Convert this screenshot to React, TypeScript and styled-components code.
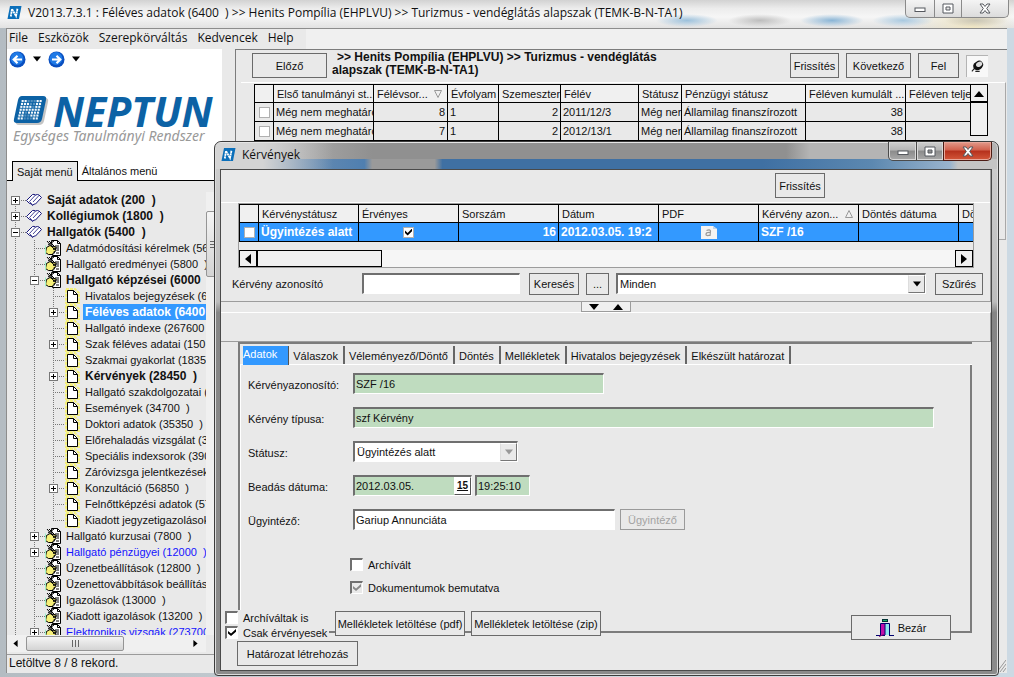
import React from "react";
import styled, { createGlobalStyle, css } from "styled-components";

const face = "#e9e9e9";
const line = "#7c7c7c";
const select = "#3399ff";
const sans = '"Liberation Sans", Arial, sans-serif';
const segoe = '"Open Sans", "Noto Sans", sans-serif';

const GlobalStyle = createGlobalStyle`
  *, *::before, *::after { box-sizing: border-box; }
  body { margin: 0; background: #c9d3da; font: 11px/16px ${sans}; color: #111; }
  button, input, select { font: inherit; color: inherit; margin: 0; border-radius: 0; }
  h1, h2, p, ul { margin: 0; padding: 0; font: inherit; list-style: none; }
  svg { flex: none; }
`;

/* ---------- window chrome ---------- */

const MainWindow = styled.div`
  position: relative;
  display: flex;
  flex-direction: column;
  height: 100vh;
  min-height: 600px;
  overflow: hidden;
  padding: 0 7px 4px 6px;
  background: linear-gradient(90deg, #b4bcc2, #cfd8de 50%, #ccd9e3);
`;

const MainTitle = styled.header`
  display: flex;
  flex: none;
  align-items: flex-start;
  height: 28px;
  margin: 0 -7px 0 -6px;
  padding: 0 5px 0 7px;
  background:
    radial-gradient(ellipse at center, #9cc1dc, transparent 70%) 656px 14px / 62px 13px no-repeat,
    radial-gradient(ellipse at center, #bdbdbd, transparent 70%) 728px 14px / 64px 13px no-repeat,
    radial-gradient(ellipse at center, #8ab5d6, transparent 70%) 800px 14px / 64px 13px no-repeat,
    radial-gradient(ellipse at center, #a9c9e0, transparent 70%) 872px 14px / 62px 13px no-repeat,
    radial-gradient(ellipse at center, #c9c5b6, transparent 70%) 944px 14px / 64px 13px no-repeat,
    linear-gradient(90deg, transparent 90%, #f0e6c4 96%, transparent),
    linear-gradient(#d2d2d2, #ececec 30%, #f6f6f6 60%, #e2e2e2);
`;

const TitleIcon = styled.span`
  display: flex;
  padding-top: 5px;
  margin-right: 6px;
`;

const MainTitleText = styled.h1`
  flex: 1;
  padding-top: 5px;
  font: 12px/16px ${segoe};
  white-space: pre;
`;

const Caption = styled.div`
  display: flex;
`;

const CaptionButton = styled.button<{ $w: number; $tone?: "red" | "dark" }>`
  display: flex;
  align-items: center;
  justify-content: center;
  width: ${(p) => p.$w}px;
  height: 18px;
  padding: 0;
  border: 1px solid #8a8a8a;
  border-top: 0;
  margin-left: -1px;
  background: linear-gradient(#f4f4f4, #e8e8e8 50%, #dcdcdc);
  &:first-child { border-bottom-left-radius: 5px; }
  &:last-child { border-bottom-right-radius: 5px; }
  ${(p) => p.$tone === "dark" && css`
    height: 19px;
    border-color: #4b4b4b;
    box-shadow: inset 0 0 0 1px #d9d9d9;
    background: linear-gradient(#cfcfcf, #b5b5b5 45%, #8b8b8b 50%, #a9a9a9);
  `}
  ${(p) => p.$tone === "red" && css`
    height: 19px;
    border-color: #4d1c14;
    box-shadow: inset 0 0 0 1px #e8a79a;
    background: linear-gradient(#e29a8b, #d1604c 45%, #b5301c 50%, #d4573a);
  `}
`;

const MenuBar = styled.nav`
  flex: none;
  display: flex;
  height: 21px;
  border: 1px solid #8d8d8d;
  border-width: 1px 0 0 1px;
  background: #f0f0f0;
  font: 12px/18px ${segoe};
`;

const MenuItems = styled.ul`
  display: flex;
  gap: 10px;
  padding: 0 12px 0 2px;
  background: ${face};
`;

const MenuLink = styled.a`
  color: inherit;
  text-decoration: none;
`;

const Workspace = styled.div`
  display: flex;
  flex: 1;
  min-height: 0;
  border-left: 1px solid #8d8d8d;
  background: ${face};
`;

/* ---------- left pane ---------- */

const Sidebar = styled.aside`
  display: flex;
  flex: none;
  flex-direction: column;
  width: 215px;
  margin-right: 13px;
`;

const SidebarTop = styled.div`
  flex: none;
  background: #fff;
`;

const NavIcons = styled.div`
  display: flex;
  align-items: center;
  gap: 7px;
  height: 20px;
  padding-left: 2px;
`;

const NavButton = styled.button`
  display: flex;
  padding: 0;
  border: 0;
  background: none;
`;

const Logo = styled.div`
  height: 92px;
  padding: 26px 0 0 6px;
`;

const LogoRow = styled.div`
  display: flex;
  height: 32px;
`;

const LogoWord = styled.span`
  margin-left: 4px;
  font: italic bold 41px/32px "Noto Sans", "Open Sans", sans-serif;
  color: #0c62a5;
`;

const LogoTag = styled.p`
  font: italic 14px/18px "Noto Sans", "Open Sans", sans-serif;
  color: #999;
  white-space: nowrap;
`;

const MenuTabs = styled.div`
  display: flex;
  height: 20px;
  background: linear-gradient(#000, #000) 0 100% / 100% 1px no-repeat;
  padding-left: 5px;
`;

const MenuTab = styled.button<{ $active?: boolean }>`
  padding: 0 4px;
  border: 0;
  background: none;
  line-height: 20px;
  ${(p) => p.$active && css`
    border: 1px solid #000;
    border-bottom: 0;
    background: ${face};
  `}
`;

const TreeArea = styled.div`
  display: flex;
  flex: 1;
  min-height: 0;
  padding-top: 11px;
`;

const Tree = styled.ul`
  flex: 1;
  min-width: 0;
  overflow: hidden;
`;

const TreeRow = styled.li`
  display: flex;
  height: 16px;
  white-space: pre;
`;

const dotsV = "repeating-linear-gradient(#777 0 1px, transparent 1px 2px)";
const dotsH = "repeating-linear-gradient(90deg, #777 0 1px, transparent 1px 2px)";

const Guide = styled.span<{ $branch?: boolean; $from?: "top" | "middle"; $half?: boolean }>`
  display: flex;
  flex: none;
  align-items: center;
  width: 19px;
  padding-left: 4px;
  background-image: ${dotsV}, ${(p) => (p.$branch ? dotsH : "none")};
  background-repeat: no-repeat;
  background-size: 1px ${(p) => (p.$half ? 8 : 16)}px, 11px 1px;
  background-position: 8px ${(p) => (p.$from === "middle" ? 8 : 0)}px, 8px 8px;
`;

const Expander = styled.button<{ $open?: boolean }>`
  width: 9px;
  height: 9px;
  padding: 0;
  border: 1px solid #777;
  background:
    linear-gradient(#000, #000) 1px 3px / 5px 1px no-repeat,
    linear-gradient(#000, #000) 3px 1px / 1px ${(p) => (p.$open ? 0 : 5)}px no-repeat,
    #fff;
`;

const TreeLabel = styled.span<{ $bold?: boolean; $blue?: boolean; $selected?: boolean }>`
  flex: none;
  margin-left: 3px;
  padding: 0 2px;
  ${(p) => p.$bold && css`font: bold 12px/16px ${sans};`}
  ${(p) => p.$blue && css`color: #1414ff;`}
  ${(p) => p.$selected && css`background: ${select}; color: #fff;`}
`;

const TreeScroll = styled.div`
  flex: none;
  width: 16px;
  padding-top: 19px;
  background: #f0f0f0;
`;

const Thumb = styled.div<{ $vertical?: boolean }>`
  display: flex;
  align-items: center;
  justify-content: ${(p) => (p.$vertical ? "flex-start" : "center")};
  padding-left: ${(p) => (p.$vertical ? 3 : 0)}px;
  border: 1px solid #959595;
  border-radius: 2px;
  background: linear-gradient(#f5f5f5, #e4e4e4 50%, #d4d4d4);
  width: ${(p) => (p.$vertical ? 16 : 98)}px;
  height: ${(p) => (p.$vertical ? 66 : 15)}px;
`;

const BottomScroll = styled.div`
  display: flex;
  flex: none;
  align-items: center;
  height: 17px;
  width: 199px;
  padding-left: 5px;
  gap: 7px;
  background: #f0f0f0;
`;

const Status = styled.footer`
  flex: none;
  height: 19px;
  margin-top: 2px;
  padding-left: 2px;
  border-top: 1px solid #9b9b9b;
  font: 12px/17px ${sans};
`;

/* ---------- right pane ---------- */

const RecordPane = styled.main`
  flex: 1;
  min-width: 0;
  border-top: 1px solid ${line};
  border-left: 1px solid ${line};
`;

const RecordHead = styled.div`
  display: flex;
  height: 32px;
  padding: 3px 19px 0 16px;
  gap: 7px;
`;

const RecordTitle = styled.h2`
  flex: 1;
  margin: -2px 0 0 -2px;
  font: bold 12px/13px ${sans};
`;

const TitleWidth = styled.span`
  display: block;
  width: 340px;
  text-indent: 5px;
`;

const TitleRest = styled.span`
  display: block;
  text-indent: 0;
`;

const Button = styled.button<{ $w: number; $h?: number }>`
  display: flex;
  flex: none;
  align-items: center;
  justify-content: center;
  gap: 4px;
  width: ${(p) => p.$w}px;
  height: ${(p) => p.$h ?? 25}px;
  padding: 0;
  border: 1px solid #6a6a6a;
  background: ${face};
  white-space: nowrap;
  &:disabled { border-color: #9a9a9a; color: #a3a3a3; }
`;

const PinButton = styled.button`
  display: flex;
  align-items: center;
  justify-content: center;
  width: 22px;
  height: 22px;
  margin-top: 2px;
  padding: 0;
  border: 1px solid #b4b4b4;
  border-width: 1px 0 0 1px;
  background: #f8f8f8;
`;

const RecordGrid = styled.section`
  display: flex;
  height: 158px;
  margin: 0 1px 0 5px;
  padding: 1px 17px 0 13px;
  border: 1px solid #a8a8a8;
  border-width: 1px 1px 1px 0;
  border-top-color: #fff;
`;

const Clip = styled.div`
  flex: 1;
  min-width: 0;
  overflow: hidden;
`;

const Table = styled.table<{ $w: number }>`
  width: ${(p) => p.$w}px;
  table-layout: fixed;
  border-collapse: separate;
  border-spacing: 0;
  border: 1px solid #000;
  border-width: 1px 0 0 1px;
`;

const Th = styled.th`
  height: 18px;
  padding: 0 3px;
  border: 1px solid #000;
  border-width: 0 1px 1px 0;
  background: #f0f0f0;
  font-weight: normal;
  line-height: 16px;
  text-align: left;
  white-space: nowrap;
  overflow: hidden;
`;

const HeadFlex = styled.span`
  display: flex;
  align-items: center;
  justify-content: space-between;
  padding-right: 2px;
`;

const Td = styled.td<{ $align?: "right" | "center"; $on?: boolean }>`
  height: 19px;
  padding: 0 2px;
  border: 1px solid #000;
  border-width: 0 1px 1px 0;
  line-height: 16px;
  text-align: ${(p) => p.$align ?? "left"};
  vertical-align: middle;
  white-space: nowrap;
  overflow: hidden;
  > svg, > input { display: block; margin: 0 auto; }
  ${(p) => p.$on && css`
    background: ${select};
    color: #fff;
    font: bold 12px/16px ${sans};
  `}
`;

const RecordScroll = styled.div`
  display: flex;
  flex: none;
  align-items: flex-start;
  justify-content: center;
  width: 18px;
  height: 52px;
  padding-top: 4px;
  border: 1px solid #000;
  background: linear-gradient(#000, #000) 0 16px / 100% 2px no-repeat, #f0f0f0;
`;

const SizeGrip = styled.svg`
  position: absolute;
  right: 8px;
  bottom: 5px;
`;

/* ---------- dialog ---------- */

const Dialog = styled.section`
  position: absolute;
  top: 141px;
  right: 15px;
  bottom: 1px;
  left: 214px;
  display: flex;
  flex-direction: column;
  padding: 0 6px 4px 5px;
  border: 1px solid #3c3c3c;
  border-radius: 7px 7px 4px 4px;
  background: linear-gradient(#cfcfcf, #bdbdbd 30%, #858585 32%, #8b8b8b);
  box-shadow: inset 0 0 0 1px #dcdcdc;
`;

const DialogTitle = styled.header`
  display: flex;
  flex: none;
  align-items: flex-start;
  height: 27px;
  margin: 0 -5px 0 -4px;
  padding: 0 5px;
  background:
    linear-gradient(#e6e6e6, #e6e6e6) 0 0 / 100% 1px no-repeat,
    linear-gradient(90deg, #d4d4d4 0 6%, #d4d4d400 15%),
    linear-gradient(90deg, #8a9db2, #4f7fb0 19%, #9a9a9a 20% 28%, #3f70a3 29% 70%, #5c88b0 84%, #9ab4cd 94%, #c4c4c4 95%) 0 100% / 100% 10px no-repeat,
    linear-gradient(90deg, #c4c4c4, #909090 20% 73%, #b4b4b4 76% 100%);
  border-radius: 6px 6px 0 0;
`;

const DialogTitleText = styled.h2`
  flex: 1;
  padding-top: 5px;
  font: 12px/16px ${segoe};
`;

const DialogBody = styled.div`
  display: flex;
  flex: 1;
  flex-direction: column;
  min-height: 0;
  border: 1px solid #4a4a4a;
  background: ${face};
`;

const ListPanel = styled.div`
  flex: none;
  border: 1px solid #9c9c9c;
  border-width: 0 1px 1px 0;
`;

const ListTools = styled.div`
  display: flex;
  justify-content: flex-end;
  height: 32px;
  padding: 3px 165px 0 0;
`;

const ListSection = styled.div`
  border-top: 1px solid #fff;
`;

const GridFrame = styled.div`
  margin: 0 16px 0 17px;
  border: 1px solid #9c9c9c;
`;

const ScrollRow = styled.div`
  display: flex;
  height: 17px;
  margin-top: 8px;
  background: #f6f6f6;
`;

const ScrollEnd = styled.button`
  display: flex;
  align-items: center;
  justify-content: center;
  width: 18px;
  padding: 0;
  border: 1px solid #000;
  background: #f0f0f0;
`;

const ScrollThumb = styled.div`
  width: 125px;
  margin-right: auto;
  border: 1px solid #000;
  background: #f0f0f0;
`;

const SearchRow = styled.div`
  display: flex;
  align-items: center;
  height: 33px;
  padding: 0 7px 2px 11px;
`;

const SearchLabel = styled.label`
  width: 130px;
`;

const Spacer = styled.span<{ $w: number }>`
  flex: none;
  width: ${(p) => p.$w}px;
`;

const sunken = css`
  border: 1px solid #fff;
  border-top: 2px solid #6f6f6f;
  border-left: 2px solid #6f6f6f;
`;

const TextBox = styled.input<{ $w: number; $green?: boolean }>`
  ${sunken}
  flex: none;
  width: ${(p) => p.$w}px;
  height: 21px;
  padding: 0 1px;
  background: ${(p) => (p.$green ? "#bfdcbf" : "#fff")};
  outline: 0;
`;

const SelectBox = styled.span<{ $w?: number }>`
  ${sunken}
  display: grid;
  flex: ${(p) => (p.$w ? "none" : "1")};
  width: ${(p) => (p.$w ? `${p.$w}px` : "auto")};
  height: 21px;
  background: #fff;
  > * { grid-area: 1 / 1; }
  select {
    width: 100%;
    padding: 0 2px;
    border: 0;
    background: none;
    appearance: none;
    outline: 0;
    opacity: 1;
    color: #111;
  }
`;

const SelectArrow = styled.span`
  display: flex;
  align-items: center;
  justify-content: center;
  justify-self: end;
  width: 17px;
  border: 1px solid #777;
  border-top-color: #fff;
  border-left-color: #ddd;
  background: ${face};
  pointer-events: none;
`;

const SplitBar = styled.div`
  display: flex;
  flex: none;
  justify-content: center;
  height: 10px;
`;

const SplitButton = styled.button`
  display: flex;
  align-items: center;
  justify-content: space-around;
  width: 50px;
  padding: 0;
  border: 1px solid #9c9c9c;
  border-top: 0;
  background: #f0f0f0;
`;

const Strip = styled.div`
  flex: none;
  height: 30px;
  border: 1px solid #9c9c9c;
  border-top-color: #fff;
  border-left: 0;
`;

const TabControl = styled.div`
  display: flex;
  flex: 1;
  flex-direction: column;
  min-height: 0;
  margin: 0 19px 0 17px;
  border-top: 2px solid ${line};
  border-left: 2px solid ${line};
`;

const TabList = styled.div`
  display: flex;
  flex: none;
  height: 21px;
  padding: 2px 0 0 3px;
  background: linear-gradient(#fff, #fff) 0 100% / 100% 1px no-repeat;
`;

const TabButton = styled.button<{ $active?: boolean }>`
  height: 18px;
  padding: 2px 5px 0 4px;
  border: 0;
  border-right: 2px solid #666;
  background: none;
  line-height: 16px;
  white-space: nowrap;
  ${(p) => p.$active && css`
    height: 19px;
    padding: 0 11px 3px 0;
    border-right: 1px solid #555;
    background: ${select};
    color: #fff;
  `}
`;

const TabPage = styled.form`
  flex: 1;
  padding: 8px 0 0 7px;
  border: 2px solid ${line};
  border-width: 0 2px 2px 0;
  border-left: 1px solid #fff;
`;

const FieldRow = styled.div`
  display: flex;
  align-items: center;
  height: 21px;
  margin-bottom: 13px;
`;

const FieldLabel = styled.label`
  width: 105px;
  padding-top: 3px;
  line-height: 18px;
`;

const DateField = styled.span`
  ${sunken}
  display: flex;
  width: 119px;
  height: 21px;
  margin-right: 3px;
  background: #bfdcbf;
  input {
    flex: 1;
    min-width: 0;
    padding: 0 1px;
    border: 0;
    background: none;
    outline: 0;
  }
  button {
    width: 17px;
    padding: 0;
    border: 1px solid #555;
    border-top-color: #fff;
    border-left-color: #fff;
    background: #fff;
    font: bold 10px/12px ${sans};
    text-decoration: underline;
  }
`;

const CheckLabel = styled.label`
  display: flex;
  align-items: center;
  gap: 5px;
  height: 15px;
`;

const PageChecks = styled.div`
  display: grid;
  gap: 8px;
  padding: 14px 0 0 102px;
`;

const Check = styled.input<{ $flat?: boolean }>`
  ${sunken}
  display: inline-grid;
  flex: none;
  width: 13px;
  height: 13px;
  appearance: none;
  background: #fff;
  ${(p) => p.$flat && css`
    width: 11px;
    height: 11px;
    border: 1px solid #b0b0b0;
  `}
  &::before {
    content: "";
    display: block;
    height: 7px;
    margin: 1px;
  }
  &:checked::before {
    background: #000;
    clip-path: polygon(0 30%, 38% 64%, 100% 0, 100% 40%, 38% 100%, 0 66%);
  }
  &:disabled { background: ${face}; }
  &:disabled::before { background: #888; }
`;

const DialogFoot = styled.div`
  position: relative;
  display: flex;
  flex: none;
  align-items: flex-start;
  height: 60px;
  margin-top: -23px;
  padding: 0 40px 0 3px;
`;

const FootRow = styled.div`
  display: flex;
  gap: 6px;
  height: 26px;
  margin-bottom: 5px;
`;

const FootChecks = styled.div`
  width: 105px;
  height: 30px;
  padding-left: 1px;
  background: ${face};
  white-space: nowrap;
`;

const FootLeft = styled.div`
  flex: 1;
  > button { margin-left: 13px; }
  ${FootRow} button { margin-top: 1px; }
`;

const CloseSlot = styled.div`
  padding-top: 5px;
`;

/* ---------- drawings ---------- */

const AppIcon = () => (
  <svg width="15" height="15" viewBox="0 0 15 15" aria-hidden>
    <path d="M3.500 1h11l-2.500 13H.5L3 1z" fill="#0b6fba" />
    <path d="M3.800 11.500 5 4l4 7 1.500-7.500" stroke="#fff" strokeWidth="1.800" fill="none" strokeDasharray="2.200 .4" />
  </svg>
);

const dotRows = ["1100011", "1110011", "1111011", "1111111", "1101111", "1100111", "1100011"];

const LogoMark = () => (
  <svg width="36" height="32" viewBox="0 0 36 32" aria-hidden>
    <path d="M11 3h21q4 0 3 4l-4 19q-1 4-5 4H6q-4 0-3-4L7 7q1-4 4-4z" fill="#c4c4c4" />
    <path d="M9 1h21q4 0 3 4l-4 19q-1 4-5 4H4q-4 0-3-4L5 5q1-4 4-4z" fill="#0c62a5" />
    {dotRows.flatMap((r, y) =>
      [...r].map((d, x) => (
        <rect
          key={`${x}-${y}`}
          x={8.6 + x * 3 - y * 0.65}
          y={5 + y * 2.9}
          width="2.1"
          height="2.1"
          fill="#fff"
          opacity={d === "1" ? 0.95 : 0.3}
        />
      )),
    )}
  </svg>
);

const ArrowBall = ({ flip }: { flip?: boolean }) => (
  <svg width="17" height="17" viewBox="0 0 17 17" aria-hidden>
    <circle cx="8.5" cy="8.5" r="8" fill="#0a4fc0" />
    <circle cx="8" cy="7.5" r="6.4" fill="#1f7ae6" />
    <path
      d={flip ? "M4 8.5h8M8.5 4.8l3.8 3.7-3.8 3.7" : "M13 8.5H5M8.5 4.8 4.7 8.5l3.8 3.7"}
      stroke="#fff"
      strokeWidth="2.2"
      fill="none"
    />
  </svg>
);

type Dir = "up" | "down" | "left" | "right";
const triPaths: Record<Dir, string> = {
  up: "M0 8 5 2l5 6z",
  down: "M0 2h10L5 8z",
  left: "M8 0v10L2 5z",
  right: "M2 0v10l6-5z",
};
const Tri = ({ dir, size = 9, color = "#000" }: { dir: Dir; size?: number; color?: string }) => (
  <svg width={size} height={size} viewBox="0 0 10 10" aria-hidden>
    <path d={triPaths[dir]} fill={color} />
  </svg>
);

const SortMark = ({ up }: { up?: boolean }) => (
  <svg width="8" height="8" viewBox="0 0 8 8" aria-hidden>
    <path d={up ? "M.5 7.5h7L4 .5z" : "M.5.5h7L4 7.5z"} fill="none" stroke="#999" />
  </svg>
);

const BookIcon = () => (
  <svg width="16" height="16" viewBox="0 0 16 16" aria-hidden>
    <path d="M.5 8.500 6.500 2.500q1.500-.5 3 .5Q11.500 2 13 3l2.500 2.500L9.500 12q-1.500-.5-3 1.500Q5.500 11 3.500 11.500z" fill="#fff" stroke="#15157a" />
    <path d="M9.500 3 3.500 9.500l3 3.500M13 3.500 7 10" fill="none" stroke="#15157a" strokeWidth=".8" />
  </svg>
);

const HandIcon = () => (
  <svg width="16" height="16" viewBox="0 0 16 16" aria-hidden>
    <path d="M6.500.5h6l3 3v12h-8z" fill="#fff" stroke="#000" />
    <path d="M12.500.5v3h3M10 6h4M11 8h3M12 10h2M11 13h3" fill="none" stroke="#000" />
    <path d="M1.500 7.500 5 5.500l2 1 4 .5v1.500L8 9l3 .5v1.500l-2 .5.500 1.500H8v1.500H3.500l-3-2z" fill="#f6ef78" stroke="#000" />
    <path d="M2 1l7 8M4 1l6 6M9 1 3 5" stroke="#000" fill="none" />
    <path d="M.5 5.500v9" stroke="#9df0c8" />
  </svg>
);

const PageIcon = () => (
  <svg width="16" height="16" viewBox="0 0 16 16" aria-hidden>
    <path d="M2 1h9l4 4v10H2z" fill="none" stroke="#f5f07a" strokeWidth="2" strokeDasharray="3 1" />
    <path d="M3.500 2.500h6l4 4v8h-10z" fill="#fff" stroke="#000" />
    <path d="M9.500 2.500v4h4" fill="none" stroke="#000" />
  </svg>
);

const PinIcon = () => (
  <svg width="13" height="13" viewBox="0 0 12 12" aria-hidden>
    <path d="M2 5q0-2 3-3.500Q8-.5 10 1.500t1 4Q9 9.500 5.500 9.500 2 9 2 5z" fill="#111" />
    <ellipse cx="7.500" cy="4" rx="3" ry="2.200" transform="rotate(-30 7.500 4)" fill="#ddd" />
    <path d="M3 8 .8 10.500M4 10.500h4" stroke="#222" />
  </svg>
);

const PdfIcon = () => (
  <svg width="16" height="13" viewBox="0 0 16 13" aria-hidden>
    <path d="M0 0h12l4 3v10H0z" fill="#f3f3f3" />
    <path d="M12 0v3h4" fill="#bdd4ea" />
    <path d="M5.500 4.500q3.500-1.500 4 .5l-.5 5M9.200 6.500q-4-.3-4.200 1.700t4 1" fill="none" stroke="#999" strokeWidth="1.200" />
  </svg>
);

const DoorIcon = () => (
  <svg width="18" height="18" viewBox="0 0 18 18" aria-hidden>
    <rect x="6.500" y=".5" width="5" height="2" fill="#19b36a" stroke="#033" />
    <path d="M4.500 16V4.500h9V16" fill="#8fe8ef" stroke="#00006e" />
    <path d="M5 5h4v11l-4 .5z" fill="#c010a8" />
    <path d="M9 4.500V16M0 16.500h9M13 16.500h5" stroke="#00006e" />
    <path d="M3 17.500 8 15.500" stroke="#800070" />
  </svg>
);

const captions = {
  min: <rect x="1" y="5" width="10" height="3.500" />,
  max: <path d="M1 1h10v9H1zM4 4h4v3H4z" />,
  close: <path d="M1 1h3l2 2.500L8 1h3L7.700 5.500 11 10H8L6 7.500 4 10H1l3.300-4.500z" />,
};
const CaptionGlyph = ({ kind }: { kind: keyof typeof captions }) => (
  <svg width="12" height="11" viewBox="0 0 12 11" fill="#fff" fillRule="evenodd" stroke="#55585e" aria-hidden>
    {captions[kind]}
  </svg>
);

const GripLines = ({ vertical }: { vertical?: boolean }) => (
  <svg width="8" height="8" viewBox="0 0 8 8" aria-hidden>
    <path d={vertical ? "M0 1.500h8M0 4.500h8M0 7.500h8" : "M1.500 0v7M4.500 0v7M7.500 0v7"} stroke="#666" />
  </svg>
);

/* ---------- data ---------- */

interface Node {
  level: 0 | 1 | 2;
  text: string;
  exp?: "+" | "-";
  bold?: boolean;
  blue?: boolean;
  selected?: boolean;
}

const nodes: Node[] = [
  { level: 0, text: "Saját adatok (200  )", exp: "+", bold: true },
  { level: 0, text: "Kollégiumok (1800  )", exp: "+", bold: true },
  { level: 0, text: "Hallgatók (5400  )", exp: "-", bold: true },
  { level: 1, text: "Adatmódosítási kérelmek (560" },
  { level: 1, text: "Hallgató eredményei (5800  )" },
  { level: 1, text: "Hallgató képzései (6000", exp: "-", bold: true },
  { level: 2, text: "Hivatalos bejegyzések (62" },
  { level: 2, text: "Féléves adatok (6400", exp: "+", bold: true, selected: true },
  { level: 2, text: "Hallgató indexe (267600" },
  { level: 2, text: "Szak féléves adatai (150", exp: "+" },
  { level: 2, text: "Szakmai gyakorlat (18350" },
  { level: 2, text: "Kérvények (28450  )", exp: "+", bold: true },
  { level: 2, text: "Hallgató szakdolgozatai (3" },
  { level: 2, text: "Események (34700  )" },
  { level: 2, text: "Doktori adatok (35350  )" },
  { level: 2, text: "Előrehaladás vizsgálat (35" },
  { level: 2, text: "Speciális indexsorok (390" },
  { level: 2, text: "Záróvizsga jelentkezések" },
  { level: 2, text: "Konzultáció (56850  )", exp: "+" },
  { level: 2, text: "Felnőttképzési adatok (57" },
  { level: 2, text: "Kiadott jegyzetigazolások" },
  { level: 1, text: "Hallgató kurzusai (7800  )", exp: "+" },
  { level: 1, text: "Hallgató pénzügyei (12000  )", exp: "+", blue: true },
  { level: 1, text: "Üzenetbeállítások (12800  )" },
  { level: 1, text: "Üzenettovábbítások beállítás" },
  { level: 1, text: "Igazolások (13000  )" },
  { level: 1, text: "Kiadott igazolások (13200  )" },
  { level: 1, text: "Elektronikus vizsgák (273700", exp: "+", blue: true },
];

const levelIcons = [BookIcon, HandIcon, PageIcon];

const recordCols = [19, 100, 74, 51, 62, 78, 43, 124, 100, 100];
const recordHeads = ["", "Első tanulmányi st...", "Félévsor...", "Évfolyam", "Szemeszter", "Félév", "Státusz", "Pénzügyi státusz", "Féléven kumulált ...", "Féléven teljes"];
const recordRows = [
  ["Még nem meghatáro", "8", "1", "2", "2011/12/3", "Még ner", "Államilag finanszírozott", "38", ""],
  ["Még nem meghatáro", "7", "1", "2", "2012/13/1", "Még ner", "Államilag finanszírozott", "38", ""],
];
const rightCols = [1, 3, 7];

const requestCols = [19, 100, 100, 100, 100, 100, 100, 100, 100];
const requestHeads = ["", "Kérvénystátusz", "Érvényes", "Sorszám", "Dátum", "PDF", "Kérvény azon...", "Döntés dátuma", "Dö"];
const sum = (a: number[]) => a.reduce((s, n) => s + n, 1);

const tabs = ["Adatok", "Válaszok", "Véleményező/Döntő", "Döntés", "Mellékletek", "Hivatalos bejegyzések", "Elkészült határozat"];

const Cols = ({ widths }: { widths: number[] }) => (
  <colgroup>
    {widths.map((w, i) => (
      <col key={i} width={w} />
    ))}
  </colgroup>
);

const TreeNode = ({ node, index }: { node: Node; index: number }) => {
  const Icon = levelIcons[node.level];
  const next = nodes[index + 1];
  const lastOfLevel = node.level === 2 && !!next && next.level < 2;
  const guides = Array.from({ length: node.level + 1 }, (_, i) => i);
  return (
    <TreeRow>
      {guides.map((g) => (
        <Guide
          key={g}
          $branch={g === node.level}
          $from={index === 0 ? "middle" : "top"}
          $half={index === 0 || (lastOfLevel && g === 2)}
        >
          {g === node.level && node.exp && <Expander $open={node.exp === "-"} aria-label={node.text} />}
        </Guide>
      ))}
      <Icon />
      <TreeLabel $bold={node.bold} $blue={node.blue} $selected={node.selected}>
        {node.text}
      </TreeLabel>
    </TreeRow>
  );
};

export default function App() {
  return (
    <>
      <GlobalStyle />
      <MainWindow>
        <MainTitle>
          <TitleIcon><AppIcon /></TitleIcon>
          <MainTitleText>
            {"V2013.7.3.1 : Féléves adatok (6400  ) >> Henits Pompília (EHPLVU) >> Turizmus - vendéglátás alapszak (TEMK-B-N-TA1)"}
          </MainTitleText>
          <Caption>
            <CaptionButton $w={30} aria-label="Kis méret"><CaptionGlyph kind="min" /></CaptionButton>
            <CaptionButton $w={28} aria-label="Teljes méret"><CaptionGlyph kind="max" /></CaptionButton>
            <CaptionButton $w={48} aria-label="Bezárás"><CaptionGlyph kind="close" /></CaptionButton>
          </Caption>
        </MainTitle>
        <MenuBar>
          <MenuItems>
            {["File", "Eszközök", "Szerepkörváltás", "Kedvencek", "Help"].map((m) => (
              <li key={m}><MenuLink href="#">{m}</MenuLink></li>
            ))}
          </MenuItems>
        </MenuBar>

        <Workspace>
          <Sidebar>
            <SidebarTop>
              <NavIcons>
                <NavButton aria-label="Vissza"><ArrowBall /></NavButton>
                <Tri dir="down" size={8} />
                <NavButton aria-label="Előre"><ArrowBall flip /></NavButton>
                <Tri dir="down" size={8} />
              </NavIcons>
              <Logo>
                <LogoRow>
                  <LogoMark />
                  <LogoWord>NEPTUN</LogoWord>
                </LogoRow>
                <LogoTag>Egységes Tanulmányi Rendszer</LogoTag>
              </Logo>
              <MenuTabs>
                <MenuTab $active>Saját menü</MenuTab>
                <MenuTab>Általános menü</MenuTab>
              </MenuTabs>
            </SidebarTop>
            <TreeArea>
              <Tree>
                {nodes.map((n, i) => (
                  <TreeNode key={n.text} node={n} index={i} />
                ))}
              </Tree>
              <TreeScroll>
                <Thumb $vertical><GripLines vertical /></Thumb>
              </TreeScroll>
            </TreeArea>
            <BottomScroll>
              <Tri dir="left" size={7} />
              <Thumb><GripLines /></Thumb>
              <Spacer $w={54} />
              <Tri dir="right" size={7} />
            </BottomScroll>
            <Status>Letöltve 8 / 8 rekord.</Status>
          </Sidebar>

          <RecordPane>
            <RecordHead>
              <Button $w={75}>Előző</Button>
              <RecordTitle>
                <TitleWidth>
                  {">> Henits Pompília (EHPLVU) >> Turizmus - vendéglátás"}
                  <TitleRest>alapszak (TEMK-B-N-TA1)</TitleRest>
                </TitleWidth>
              </RecordTitle>
              <Button $w={49}>Frissítés</Button>
              <Button $w={65}>Következő</Button>
              <Button $w={41}>Fel</Button>
              <PinButton aria-label="Rögzítés"><PinIcon /></PinButton>
            </RecordHead>
            <RecordGrid>
              <Clip>
                <Table $w={sum(recordCols)}>
                  <Cols widths={recordCols} />
                  <thead>
                    <tr>
                      {recordHeads.map((h, i) => (
                        <Th key={i}>
                          {i === 2 ? <HeadFlex>{h}<SortMark /></HeadFlex> : h}
                        </Th>
                      ))}
                    </tr>
                  </thead>
                  <tbody>
                    {recordRows.map((r) => (
                      <tr key={r[4]}>
                        <Td $align="center"><Check type="checkbox" $flat aria-label={r[4]} /></Td>
                        {r.map((c, i) => (
                          <Td key={i} $align={rightCols.includes(i) ? "right" : undefined}>{c}</Td>
                        ))}
                      </tr>
                    ))}
                  </tbody>
                </Table>
              </Clip>
              <RecordScroll><Tri dir="up" size={10} /></RecordScroll>
            </RecordGrid>
          </RecordPane>
        </Workspace>
        <SizeGrip width="9" height="16" viewBox="0 0 9 16" aria-hidden>
          <path d="M0 16 9 4M3 16l6-8M6 16l3-4" stroke="#999" />
        </SizeGrip>

        <Dialog>
          <DialogTitle>
            <TitleIcon><AppIcon /></TitleIcon>
            <DialogTitleText>Kérvények</DialogTitleText>
            <Caption>
              <CaptionButton $w={29} $tone="dark" aria-label="Kis méret"><CaptionGlyph kind="min" /></CaptionButton>
              <CaptionButton $w={28} $tone="dark" aria-label="Teljes méret"><CaptionGlyph kind="max" /></CaptionButton>
              <CaptionButton $w={49} $tone="red" aria-label="Bezárás"><CaptionGlyph kind="close" /></CaptionButton>
            </Caption>
          </DialogTitle>
          <DialogBody>
            <ListPanel>
              <ListTools><Button $w={50}>Frissítés</Button></ListTools>
              <ListSection>
                <GridFrame>
                  <Clip>
                    <Table $w={sum(requestCols)}>
                      <Cols widths={requestCols} />
                      <thead>
                        <tr>
                          {requestHeads.map((h, i) => (
                            <Th key={i}>
                              {i === 6 ? <HeadFlex>{h}<SortMark up /></HeadFlex> : h}
                            </Th>
                          ))}
                        </tr>
                      </thead>
                      <tbody>
                        <tr>
                          <Td $on $align="center"><Check type="checkbox" $flat aria-label="Kijelölés" /></Td>
                          <Td $on>Ügyintézés alatt</Td>
                          <Td $on $align="center"><Check type="checkbox" $flat defaultChecked aria-label="Érvényes" /></Td>
                          <Td $on $align="right">16</Td>
                          <Td $on>2012.03.05. 19:2</Td>
                          <Td $on $align="center"><PdfIcon /></Td>
                          <Td $on>SZF /16</Td>
                          <Td $on />
                          <Td $on />
                        </tr>
                      </tbody>
                    </Table>
                  </Clip>
                  <ScrollRow>
                    <ScrollEnd aria-label="Balra"><Tri dir="left" size={10} /></ScrollEnd>
                    <ScrollThumb />
                    <ScrollEnd aria-label="Jobbra"><Tri dir="right" size={10} /></ScrollEnd>
                  </ScrollRow>
                </GridFrame>
                <SearchRow>
                  <SearchLabel htmlFor="search">Kérvény azonosító</SearchLabel>
                  <TextBox id="search" $w={158} />
                  <Spacer $w={9} />
                  <Button $w={50} $h={22}>Keresés</Button>
                  <Spacer $w={7} />
                  <Button $w={23} $h={22}>...</Button>
                  <Spacer $w={7} />
                  <SelectBox>
                    <select aria-label="Szűrő"><option>Minden</option></select>
                    <SelectArrow><Tri dir="down" size={8} /></SelectArrow>
                  </SelectBox>
                  <Spacer $w={9} />
                  <Button $w={48} $h={22}>Szűrés</Button>
                </SearchRow>
              </ListSection>
            </ListPanel>
            <SplitBar>
              <SplitButton aria-label="Elválasztó">
                <Tri dir="down" size={10} />
                <Tri dir="up" size={10} />
              </SplitButton>
            </SplitBar>
            <Strip />
            <TabControl>
              <TabList>
                {tabs.map((t, i) => (
                  <TabButton key={t} $active={i === 0}>{t}</TabButton>
                ))}
              </TabList>
              <TabPage>
                <FieldRow>
                  <FieldLabel htmlFor="rid">Kérvényazonosító:</FieldLabel>
                  <TextBox id="rid" $w={251} $green defaultValue="SZF /16" />
                </FieldRow>
                <FieldRow>
                  <FieldLabel htmlFor="rtype">Kérvény típusa:</FieldLabel>
                  <TextBox id="rtype" $w={581} $green defaultValue="szf Kérvény" />
                </FieldRow>
                <FieldRow>
                  <FieldLabel htmlFor="rstate">Státusz:</FieldLabel>
                  <SelectBox $w={165}>
                    <select id="rstate" disabled><option>Ügyintézés alatt</option></select>
                    <SelectArrow><Tri dir="down" size={8} color="#999" /></SelectArrow>
                  </SelectBox>
                </FieldRow>
                <FieldRow>
                  <FieldLabel htmlFor="rdate">Beadás dátuma:</FieldLabel>
                  <DateField>
                    <input id="rdate" defaultValue="2012.03.05." />
                    <button type="button">15</button>
                  </DateField>
                  <TextBox $w={55} $green defaultValue="19:25:10" aria-label="Időpont" />
                </FieldRow>
                <FieldRow>
                  <FieldLabel htmlFor="rclerk">Ügyintéző:</FieldLabel>
                  <TextBox id="rclerk" $w={262} defaultValue="Gariup Annunciáta" />
                  <Spacer $w={5} />
                  <Button $w={65} $h={21} disabled type="button">Ügyintéző</Button>
                </FieldRow>
                <PageChecks>
                  <CheckLabel><Check type="checkbox" />Archívált</CheckLabel>
                  <CheckLabel><Check type="checkbox" defaultChecked disabled />Dokumentumok bemutatva</CheckLabel>
                </PageChecks>
              </TabPage>
            </TabControl>
            <DialogFoot>
              <FootLeft>
                <FootRow>
                  <FootChecks>
                    <CheckLabel><Check type="checkbox" />Archíváltak is</CheckLabel>
                    <CheckLabel><Check type="checkbox" defaultChecked />Csak érvényesek</CheckLabel>
                  </FootChecks>
                  <Button $w={130}>Mellékletek letöltése (pdf)</Button>
                  <Button $w={130}>Mellékletek letöltése (zip)</Button>
                </FootRow>
                <Button $w={121}>Határozat létrehozás</Button>
              </FootLeft>
              <CloseSlot>
                <Button $w={100}><DoorIcon />Bezár</Button>
              </CloseSlot>
            </DialogFoot>
          </DialogBody>
        </Dialog>
      </MainWindow>
    </>
  );
}
